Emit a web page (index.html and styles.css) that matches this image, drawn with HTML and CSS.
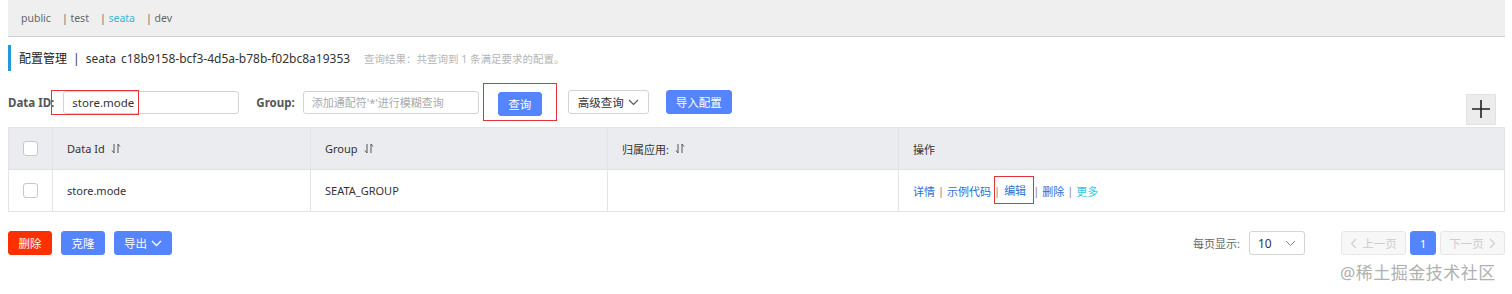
FILE: index.html
```html
<!DOCTYPE html>
<html lang="zh">
<head>
<meta charset="utf-8">
<title>配置管理</title>
<link rel="stylesheet" href="styles.css">
</head>
<body>
<div class="page">
  <div class="ns-bar">
    <span class="ns">public</span>
    <span class="ns">| test</span>
    <span class="ns active"><span class="sep">|</span> seata</span>
    <span class="ns">| dev</span>
  </div>

  <div class="title-row">
    <span class="title-main">配置管理</span>
    <span class="title-sep">|</span>
    <span class="title-ns">seata</span>
    <span class="title-id">c18b9158-bcf3-4d5a-b78b-f02bc8a19353</span>
    <span class="title-hint">查询结果：共查询到 1 条满足要求的配置。</span>
  </div>

  <div class="search-row">
    <label class="lbl">Data ID:</label>
    <div class="input-wrap dataid">
      <div class="input"><span class="val">store.mode</span></div>
      <span class="mark mark-dataid"></span>
    </div>
    <label class="lbl lbl-group">Group:</label>
    <div class="input group"><span class="ph">添加通配符'*'进行模糊查询</span></div>
    <span class="mark-box query-box"><button class="btn primary">查询</button></span>
    <button class="btn normal adv">高级查询 <svg class="chev" width="11" height="7" viewBox="0 0 11 7"><path d="M1 1l4.5 4.5L10 1" fill="none" stroke="#555" stroke-width="1.1"/></svg></button>
    <button class="btn primary import">导入配置</button>
    <span class="spacer"></span>
    <button class="plus"><svg width="20" height="20" viewBox="0 0 20 20"><path d="M10 1v18M1 10h18" stroke="#222" stroke-width="1.6"/></svg></button>
  </div>

  <div class="table">
    <div class="tr th">
      <div class="td c0"><span class="cb"></span></div>
      <div class="td c1">Data Id <svg class="sort" width="10" height="11" viewBox="0 0 10 11"><path d="M3 1v9M1 7.5l2 2.5M7 10V1M7 1l2 2.5" fill="none" stroke="#555" stroke-width="1"/></svg></div>
      <div class="td c2">Group <svg class="sort" width="10" height="11" viewBox="0 0 10 11"><path d="M3 1v9M1 7.5l2 2.5M7 10V1M7 1l2 2.5" fill="none" stroke="#555" stroke-width="1"/></svg></div>
      <div class="td c3">归属应用: <svg class="sort" width="10" height="11" viewBox="0 0 10 11"><path d="M3 1v9M1 7.5l2 2.5M7 10V1M7 1l2 2.5" fill="none" stroke="#555" stroke-width="1"/></svg></div>
      <div class="td c4">操作</div>
    </div>
    <div class="tr body">
      <div class="td c0"><span class="cb"></span></div>
      <div class="td c1">store.mode</div>
      <div class="td c2">SEATA_GROUP</div>
      <div class="td c3"></div>
      <div class="td c4 ops">
        <a class="link">详情</a><span class="bar">|</span><a class="link">示例代码</a><span class="bar">|</span><span class="mark-box edit-box"><a class="link">编辑</a></span><span class="bar">|</span><a class="link">删除</a><span class="bar">|</span><a class="link more">更多</a>
      </div>
    </div>
  </div>

  <div class="footer-row">
    <button class="btn danger">删除</button>
    <button class="btn primary">克隆</button>
    <button class="btn primary export">导出 <svg class="chev" width="11" height="7" viewBox="0 0 11 7"><path d="M1 1l4.5 4.5L10 1" fill="none" stroke="#fff" stroke-width="1.3"/></svg></button>
    <span class="spacer"></span>
    <span class="per-page">每页显示:</span>
    <div class="select"><span>10</span><svg class="chev" width="11" height="7" viewBox="0 0 11 7"><path d="M1 1l4.5 4.5L10 1" fill="none" stroke="#888" stroke-width="1"/></svg></div>
    <div class="pager">
      <button class="pg disabled"><svg width="7" height="11" viewBox="0 0 7 11"><path d="M6 1L1.5 5.5 6 10" fill="none" stroke="#ccc" stroke-width="1.1"/></svg> 上一页</button>
      <button class="pg cur">1</button>
      <button class="pg disabled">下一页 <svg width="7" height="11" viewBox="0 0 7 11"><path d="M1 1l4.5 4.5L1 10" fill="none" stroke="#ccc" stroke-width="1.1"/></svg></button>
    </div>
  </div>

  <div class="watermark">@稀土掘金技术社区</div>
</div>
</body>
</html>
```

FILE: styles.css
```css
* { box-sizing: border-box; }
html, body { margin: 0; padding: 0; background: #fff; }
body {
  font-family: "Noto Sans", "Noto Sans CJK SC", sans-serif;
  font-size: 12px;
  color: #333;
}
.page {
  position: relative;
  width: 1512px;
  height: 294px;
  padding: 0 7px 0 8px;
}
.ns-bar {
  height: 37px;
  background: #efefef;
  border-bottom: 1px solid #d2d2d2;
  display: flex;
  align-items: center;
  padding-left: 13px;
  padding-bottom: 1px;
  color: #666;
  font-size: 10.5px;
  white-space: pre;
}
.ns { margin-right: 11px; }
.ns.active { color: #35b8d3; }
.ns.active .sep { color: #666; }

.title-row {
  margin-top: 8px;
  height: 26px;
  border-left: 3px solid #209bd8;
  display: flex;
  align-items: center;
  padding-left: 8px;
  font-size: 12px;
  color: #333;
  white-space: nowrap;
}
.title-main { color: #222; }
.title-sep { margin: 0 6px 0 6px; }
.title-id { margin-left: 5px; }
.title-hint { margin-left: 14px; font-size: 10.5px; color: #b5b5b5; }

.search-row {
  margin-top: 11px;
  display: flex;
  align-items: center;
  height: 40px;
  position: relative;
  white-space: nowrap;
}
.lbl { font-weight: bold; color: #555; font-size: 11.5px; }
.input-wrap { position: relative; margin-left: 9px; }
.input {
  height: 23px;
  border: 1px solid #d4d4d4;
  border-radius: 3px;
  display: flex;
  align-items: center;
  padding-left: 8px;
  background: #fff;
}
.dataid .input { width: 176px; }
.val { color: #333; font-size: 11.5px; }
.mark-dataid {
  position: absolute;
  left: -12px;
  top: -1px;
  width: 88px;
  height: 25px;
  border: 1px solid #e0353b;
}
.lbl-group { margin-left: 17px; }
.input.group { width: 176px; margin-left: 8px; }
.ph { color: #aaa; font-size: 11px; }
.mark-box { border: 1px solid #e0353b; display: inline-flex; align-items: center; }
.query-box { margin-left: 4px; padding: 7px 14px 4px 14px; height: 38px; }
.btn {
  height: 24px;
  border-radius: 3px;
  font-family: "Noto Sans", "Noto Sans CJK SC", sans-serif;
  font-size: 11.5px;
  padding: 0;
  border: 1px solid transparent;
  display: inline-flex;
  align-items: center;
  justify-content: center;
  gap: 4px;
  cursor: pointer;
  white-space: nowrap;
}
.btn.primary { background: #5584ff; color: #fff; border-color: #5584ff; }
.btn.normal { background: #fff; color: #333; border-color: #d4d4d4; }
.btn.danger { background: #ff3000; color: #fff; border-color: #ff3000; }
.query-box .btn { width: 44px; }
.adv { margin-left: 11px; width: 81px; }
.import { margin-left: 17px; width: 66px; }
.spacer { flex: 1; }
.plus {
  width: 30px;
  height: 31px;
  background: #ececec;
  border: 1px solid #e2e2e2;
  margin-right: 9px;
  margin-top: 14px;
  display: flex;
  align-items: center;
  justify-content: center;
  padding: 0;
}

.table {
  margin-top: 5px;
  border: 1px solid #e4e4e4;
}
.tr { display: flex; height: 42px; }
.tr.th { background: #ebecf0; border-bottom: 1px solid #e0e0e0; }
.tr.body { background: #fff; height: 41px; }
.td {
  display: flex;
  align-items: center;
  padding-left: 14px;
  border-right: 1px solid #e4e4e4;
  color: #333;
  font-size: 11px;
  white-space: nowrap;
}
.td:last-child { border-right: none; }
.sort { margin-left: 6px; }
.c0 { width: 44px; padding-left: 0; justify-content: center; }
.c1 { width: 258px; }
.c2 { width: 297px; }
.c3 { width: 291px; }
.c4 { flex: 1; }
.cb {
  width: 15px; height: 15px;
  border: 1px solid #c8c8c8;
  border-radius: 3px;
  background: #fff;
}
.ops { padding-left: 14px; }
.link { color: #2a6fd3; }
.link.more { color: #3bc6e0; }
.bar { color: #888; margin: 0 3px; }
.edit-box { height: 28px; padding: 0 7px 0 9px; margin: 0 -4px 0 -9px; position: relative; top: -1px; }

.footer-row {
  margin-top: 19px;
  display: flex;
  align-items: center;
  height: 24px;
}
.footer-row .btn.danger { width: 44px; }
.footer-row .btn.primary { margin-left: 9px; width: 44px; }
.footer-row .btn.export { width: 58px; }
.per-page { color: #666; font-size: 11px; }
.select {
  margin-left: 9px;
  width: 56px;
  height: 24px;
  border: 1px solid #d4d4d4;
  border-radius: 3px;
  display: flex;
  align-items: center;
  justify-content: space-between;
  padding: 0 8px;
}
.pager { margin-left: 36px; display: flex; gap: 4px; }
.pg {
  height: 24px;
  border-radius: 3px;
  font-family: "Noto Sans", "Noto Sans CJK SC", sans-serif;
  font-size: 11.5px;
  border: 1px solid #e6e6e6;
  background: #f7f7f7;
  color: #ccc;
  display: inline-flex;
  align-items: center;
  gap: 5px;
  justify-content: center;
  padding: 0;
  white-space: nowrap;
}
.pg.disabled { width: 65px; }
.pg.cur { width: 26px; background: #5584ff; border-color: #5584ff; color: #fff; }

.watermark {
  position: absolute;
  left: 1340px;
  top: 259px;
  font-size: 17px;
  color: #b0b0b0;
  letter-spacing: 0.5px;
  white-space: nowrap;
}
```
